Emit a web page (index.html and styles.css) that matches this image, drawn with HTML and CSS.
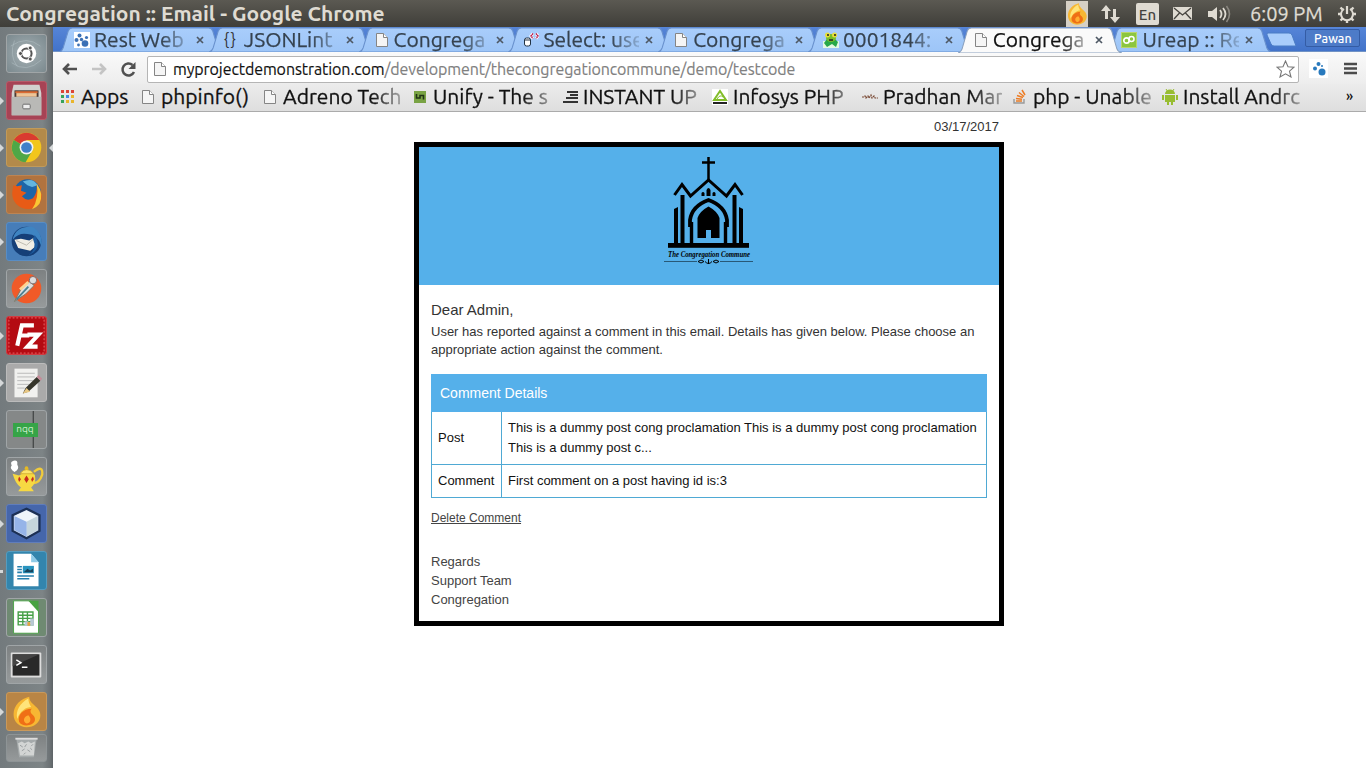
FILE: index.html
```html
<!DOCTYPE html>
<html lang="en">
<head>
<meta charset="utf-8">
<title>Congregation :: Email</title>
<link rel="stylesheet" href="styles.css">
</head>
<body>
<svg class="defs" width="0" height="0">
  <defs>
    <linearGradient id="tabfill" x1="0" y1="0" x2="0" y2="1"><stop offset="0" stop-color="#a9cdfb"/><stop offset="1" stop-color="#9dc5f7"/></linearGradient>
    <symbol id="doc" viewBox="0 0 16 16"><path d="M2.500 1.500h7l4 4v9h-11z" fill="#f5f5f5" stroke="#858585"/><path d="M9.500 1.500v4h4" fill="#fff" stroke="#858585"/></symbol>
    <symbol id="tabshape" viewBox="0 0 160 25" preserveAspectRatio="none"><path d="M0 25Q3 24 4 21L9 4Q10 1 13 1H146Q149 1 150 4L155 21Q156 24 160 25Z"/></symbol>
    <symbol id="paws" viewBox="0 0 16 16"><rect width="16" height="16" fill="#fff"/><g fill="#3b70b5"><circle cx="5.500" cy="3.500" r="2"/><circle cx="2.500" cy="8" r="2"/><circle cx="7.500" cy="7.500" r="1.700"/><circle cx="11" cy="11.500" r="3.300"/><circle cx="12.500" cy="5.500" r="1.600"/><circle cx="4.500" cy="13" r="1.400"/></g></symbol>
    <symbol id="flame" viewBox="0 0 40 40"><path d="M23 4C14 6 6 13 6 23C6 32 13 37 20 37C28 37 35 32 35 24C35 18 30 15 27 12C24 9 23 7 23 4Z" fill="#f7b733"/><path d="M22 6C13 11 8 19 10 28C13 19 20 15 25 15C23 12 22 9 22 6Z" fill="#ffe47a"/><path d="M26 17C16 17 10 24 12 31C15 37 27 36 29 30C30 26 27 24 25 22C24 20 24 18 26 17Z" fill="#ef6f16"/><path d="M22 24C16 26 16 31 20 33C24 33 26 28 22 24Z" fill="#ffad31"/></symbol>
  </defs>
</svg>

<header class="topbar">
  <h1 class="window-title">Congregation :: Email - Google Chrome</h1>
  <div class="indicators">
    <span class="ind-flame"><svg width="22" height="26" viewBox="3 2 34 37"><use href="#flame" width="40" height="40"/></svg></span>
    <svg class="ind-net" width="19" height="18" viewBox="0 0 19 18" fill="#dfdbd2"><path d="M5 0L10 6H7V14H4V6H0zM14 18L9 12h3V4h3v8h4z"/></svg>
    <span class="ind-lang">En</span>
    <svg class="ind-mail" width="19" height="13" viewBox="0 0 19 13"><rect width="19" height="13" rx="1" fill="#dfdbd2"/><path d="M1 1l8.500 7L18 1M1 12l5.500-6M18 12l-5.500-6" fill="none" stroke="#46443f" stroke-width="1.300"/></svg>
    <svg class="ind-vol" width="23" height="18" viewBox="0 0 23 18"><path d="M0 6h4l5-4v14l-5-4H0z" fill="#dfdbd2"/><path d="M12 5q3 4 0 8M15 3q5 6 0 12" fill="none" stroke="#dfdbd2" stroke-width="1.800"/><path d="M18.500 1q6 8 0 16" fill="none" stroke="#8a8780" stroke-width="1.600"/></svg>
    <span class="clock">6:09 PM</span>
    <svg class="ind-gear" width="20" height="20" viewBox="0 0 20 20" fill="none" stroke="#dfdbd2"><path d="M7 5A6 6 0 1 0 13 5" stroke-width="2"/><path d="M10 2v8" stroke-width="2.200"/><path d="M1 10h3M16 10h3M3.500 16.500l2.200-2.200M16.500 16.500l-2.200-2.200M10 16v3M3.500 3.500l2.200 2.200M16.500 3.500l-2.200 2.200" stroke-width="2.400"/></svg>
  </div>
</header>

<div class="desktop">
  <nav class="launcher">
    <div class="tile dash"><svg viewBox="0 0 40 40"><path d="M3 12Q20 0 35 12M4 30Q20 42 36 27M7 6Q1 22 10 34" fill="none" stroke="#b8c4c8" opacity=".5"/><circle cx="20" cy="20" r="10.500" fill="#fff"/><circle cx="20" cy="20" r="5.500" fill="none" stroke="#555" stroke-width="2.200"/><g fill="#555" stroke="#fff"><circle cx="13.500" cy="20" r="2.200"/><circle cx="24" cy="14" r="2.200"/><circle cx="24" cy="26" r="2.200"/></g></svg></div>
    <div class="tile files run"><svg viewBox="0 0 40 40"><path d="M6 3H34L36 12V36H4V12z" fill="#d2d1ce"/><path d="M7 9h26v8H7z" fill="#4c3932"/><path d="M8 10h24v2H8z" fill="#dc6c35"/><path d="M9 12h22v4H9z" fill="#f0c495"/><path d="M4 16H36V36H4z" fill="#b9b9b6"/><rect x="16" y="24" width="8" height="5" rx="1" fill="#eee" stroke="#666"/></svg></div>
    <div class="tile chrome run focus"><svg viewBox="0 0 40 40"><circle cx="20" cy="20" r="16" fill="#f2c61c"/><path d="M20 20L6.200 12A16 16 0 0 1 33.800 12H20z" fill="#d93b30"/><path d="M20 20L6.200 12A16 16 0 0 0 19 36L26.500 23z" fill="#4fa747"/><circle cx="20" cy="20" r="7.500" fill="#f3f3f3"/><circle cx="20" cy="20" r="5.800" fill="#3f80c8"/></svg></div>
    <div class="tile firefox run"><svg viewBox="0 0 40 40"><circle cx="21" cy="18" r="14.500" fill="#1d65a8"/><path d="M16 6Q27 1 32 10L26 12L21 10z" fill="#63b5df"/><path d="M6 10L10 11L15 10L14 16L20 18L15 22Q20 28 27 24Q32 18 31 10Q40 20 34 30Q26 39 14 34Q1 27 6 10Z" fill="#e85b16"/><path d="M31 8Q39 19 34 30Q31 34 26 36Q34 24 31 8Z" fill="#f9c734"/></svg></div>
    <div class="tile bird run"><svg viewBox="0 0 40 40"><circle cx="20" cy="20" r="16" fill="#153f78"/><path d="M5 18Q8 3 26 4Q38 10 36 25Q32 12 21 12Q12 10 5 18Z" fill="#3e84c2"/><path d="M7 18L14 17L23 19L28 16L30 25L24 30L11 27Z" fill="#f1eee5"/><path d="M9 19L20 24L28 17" fill="none" stroke="#bab7ad"/><path d="M29 13Q38 28 22 35Q32 28 27 17z" fill="#1d5b9f"/></svg></div>
    <div class="tile postman"><svg viewBox="0 0 40 40"><circle cx="20" cy="20" r="16" fill="#f05a28"/><path d="M7 34L14 21L24 12L28 17L19 26Z" fill="#ddd" stroke="#776"/><path d="M9 32L22 18" stroke="#4c8192" stroke-width="2"/><circle cx="27" cy="11" r="4" fill="#ddd" stroke="#766"/><path d="M13 21L22 13" stroke="#ffd390" stroke-width="3"/></svg></div>
    <div class="tile filezilla run"><svg viewBox="0 0 40 40"><rect x="1" y="1" width="38" height="38" fill="#b40b12" stroke="#e86a6a" stroke-dasharray="2 2"/><path d="M10 31L15 9H28M13 20H23M21 19H33L21 32H32" fill="none" stroke="#fff" stroke-width="4.500"/></svg></div>
    <div class="tile gedit run"><svg viewBox="0 0 40 40"><path d="M7 5h25v31H7z" fill="#f1f1ef"/><path d="M10 10h19M10 14h19M10 18h17M10 22h15M10 26h8" stroke="#b6b6b6"/><path d="M16 32L19 26L31 14L35 18L22 30z" fill="#35352b"/><path d="M20 26L24 30L16 32z" fill="#e8c783"/><path d="M31 14l2-2 4 4-2 2z" fill="#c58b99"/></svg></div>
    <div class="tile nqq"><span class="nqq-label">nqq</span></div>
    <div class="tile teapot"><svg viewBox="0 0 40 40"><path d="M28 15Q38 7 37 18Q34 27 28 27" fill="none" stroke="#f0cb3c" stroke-width="2.500"/><path d="M5 17L12 19Q21 12 29 18Q31 27 25 32L28 36H11L14 32Q8 28 5 17z" fill="#f7d942"/><path d="M13 17Q20 8 28 17z" fill="#fbe36a" stroke="#c79c22" stroke-width=".7"/><circle cx="20" cy="11" r="2" fill="#e6b923"/><path d="M12 20l2 3-2 3-1-3zM20 19l2.500 4-2.500 4-2.500-4zM27 20l1 3-2 3-1-3z" fill="#c62c1e"/><path d="M7 15Q1 11 4 8Q2 4 6 3Q11 2 10 7Q13 12 7 15" fill="#fff"/></svg></div>
    <div class="tile netbeans run"><svg viewBox="0 0 40 40"><path d="M20 4L34 11V28L20 36L5 28V11Z" fill="#d1dcf1" stroke="#1c3054" stroke-width="2.500"/><path d="M20 17L32 12V27L20 34z" fill="#c5d5dc"/><path d="M20 17L7 12V27L20 34z" fill="#96b4e8"/><path d="M7 12L20 6L32 12L20 18z" fill="#eff5fa"/></svg></div>
    <div class="tile writer bar"><svg viewBox="0 0 40 40"><path d="M6 2H25L33 11V37H6z" fill="#fff"/><path d="M25 2L33 11H25z" fill="#8fcbe8"/><path d="M10 16h5M10 19h5M10 22h5M10 26h18M10 29h13" stroke="#247fad" stroke-width="1.700"/><path d="M16 15h12v8H16z" fill="#2994bf"/><path d="M17 22l4-4 3 2 3-2v4z" fill="#19435b"/></svg></div>
    <div class="tile calc"><svg viewBox="0 0 40 40"><path d="M6 2H25L33 11V37H6z" fill="#fff" stroke="#48a242"/><path d="M22 2h11v12z" fill="#48a242"/><path d="M11 14h16v14H11zM11 17.500h16M11 21h16M11 24.500h16M16 14v14M21 14v14" fill="none" stroke="#46a047" stroke-width="1.500"/><path d="M18 24h4v5h-4zM24 21h4v8h-4z" fill="#b8c8d4"/><path d="M21 25h3v4h-3z" fill="#e2a342"/></svg></div>
    <div class="tile term"><svg viewBox="0 0 40 40"><rect x="3" y="7" width="33" height="27" rx="1" fill="#ddd"/><rect x="5" y="9" width="29" height="23" fill="#292929"/><path d="M5 9h29L5 22z" fill="#444"/><path d="M9 15l5 3-5 3M15 23h6" fill="none" stroke="#fff" stroke-width="1.600"/></svg></div>
    <div class="tile burn run"><svg viewBox="0 0 40 40"><use href="#flame" width="40" height="40"/></svg></div>
    <div class="tile trash"><svg viewBox="0 0 40 28"><path d="M9 4H31L28 24H12z" fill="#a5aaab"/><path d="M8 4H32" stroke="#ddd" stroke-width="2"/><path d="M11 9l4-2 3 2 4-2 3 2 4-2-1 15H13z" fill="#d3d5d4"/><path d="M13 11l3 2M20 10l-2 3M25 12l2-2M15 17l3-2M21 16l3 2M17 21l2-2M26 16l-2-2" stroke="#979c9d"/></svg></div>
  </nav>

  <section class="browser">
    <div class="tabstrip">
      <div class="tab"><svg class="shape"><use href="#tabshape"/></svg><svg class="fav"><use href="#paws"/></svg><span class="label">Rest Web</span><svg class="close" viewBox="0 0 8 8"><path d="M1 1L7 7M7 1L1 7"/></svg></div>
      <div class="tab"><svg class="shape"><use href="#tabshape"/></svg><span class="fav braces">{}</span><span class="label">JSONLint</span><svg class="close" viewBox="0 0 8 8"><path d="M1 1L7 7M7 1L1 7"/></svg></div>
      <div class="tab"><svg class="shape"><use href="#tabshape"/></svg><svg class="fav"><use href="#doc"/></svg><span class="label">Congrega</span><svg class="close" viewBox="0 0 8 8"><path d="M1 1L7 7M7 1L1 7"/></svg></div>
      <div class="tab"><svg class="shape"><use href="#tabshape"/></svg><svg class="fav" viewBox="0 0 16 16"><rect x="1.500" y="6" width="6" height="8" rx="2" fill="#fff" stroke="#234"/><path d="M2 8h5" stroke="#234"/><path d="M10 1.500L8 4L10 6.500M13 1.500l2 2.500L13 6.500" fill="none" stroke="#fff" stroke-width="3"/><path d="M10 1.500L8 4L10 6.500M13 1.500l2 2.500L13 6.500" fill="none" stroke="#b41c4c" stroke-width="1.500" stroke-dasharray="1.500 .5"/></svg><span class="label">Select: use</span><svg class="close" viewBox="0 0 8 8"><path d="M1 1L7 7M7 1L1 7"/></svg></div>
      <div class="tab"><svg class="shape"><use href="#tabshape"/></svg><svg class="fav"><use href="#doc"/></svg><span class="label">Congrega</span><svg class="close" viewBox="0 0 8 8"><path d="M1 1L7 7M7 1L1 7"/></svg></div>
      <div class="tab"><svg class="shape"><use href="#tabshape"/></svg><svg class="fav" viewBox="0 0 16 16"><path d="M0 9h16v7H0z" fill="#e5fae2"/><path d="M4 7h8l3 3-2 5-4-3-5 3-3-4z" fill="#27a849"/><ellipse cx="8" cy="6" rx="5" ry="4" fill="#78bd2b"/><circle cx="4.500" cy="3" r="2.500" fill="#e8df38"/><circle cx="11.500" cy="3" r="2.500" fill="#e8df38"/><path d="M4 3h2M11 3h2M6 8h4" stroke="#222" stroke-width="1.300"/></svg><span class="label">0001844:</span><svg class="close" viewBox="0 0 8 8"><path d="M1 1L7 7M7 1L1 7"/></svg></div>
      <div class="tab active"><svg class="shape"><use href="#tabshape"/></svg><svg class="fav"><use href="#doc"/></svg><span class="label">Congrega</span><svg class="close" viewBox="0 0 8 8"><path d="M1 1L7 7M7 1L1 7"/></svg></div>
      <div class="tab"><svg class="shape"><use href="#tabshape"/></svg><svg class="fav fav-ureap" viewBox="0 0 16 16"><rect width="16" height="16" fill="#b9d66c"/><rect x="1" y="1" width="14" height="14" fill="#8cc63f"/><circle cx="5.500" cy="8.500" r="2.700" fill="none" stroke="#fff" stroke-width="1.700"/><circle cx="10.500" cy="7" r="2.500" fill="none" stroke="#fff" stroke-width="1.500"/></svg><span class="label">Ureap :: Re</span><svg class="close" viewBox="0 0 8 8"><path d="M1 1L7 7M7 1L1 7"/></svg></div>
      <svg class="newtab" width="32" height="16" viewBox="0 0 32 16"><path d="M2 1H23Q25 1 26 3L30 14H8Q6 14 5 12L1 3Q0.500 1 2 1z" fill="#a9cdfb" stroke="#4b7cc5"/></svg>
      <span class="user">Pawan</span>
    </div>

    <div class="toolbar">
      <svg class="nav back" width="18" height="16" viewBox="0 0 18 16"><path d="M16 8H3M8 3L3 8L8 13" fill="none" stroke="#505050" stroke-width="2.600"/></svg>
      <svg class="nav forward" width="18" height="16" viewBox="0 0 18 16"><path d="M1 8H14M9 3L14 8L9 13" fill="none" stroke="#c4c4c4" stroke-width="2.600"/></svg>
      <svg class="nav reload" width="17" height="17" viewBox="0 0 17 17"><path d="M14 11A6 6 0 1 1 12.500 4" fill="none" stroke="#505050" stroke-width="2.500"/><path d="M15.500 1v7h-7z" fill="#505050"/></svg>
      <div class="omnibox">
        <svg width="16" height="16"><use href="#doc"/></svg>
        <span class="url"><b>myprojectdemonstration.com</b>/development/thecongregationcommune/demo/testcode</span>
        <svg class="star" width="19" height="18" viewBox="0 0 19 18"><path d="M9.500 1L12 6.700L18 7.200L13.500 11.200L15 17L9.500 13.800L4 17L5.500 11.200L1 7.200L7 6.700Z" fill="#fff" stroke="#777" stroke-width="1.100"/></svg>
      </div>
      <svg class="ext" width="19" height="19" viewBox="0 0 19 19"><rect width="19" height="19" fill="#fff"/><g fill="#2879bd"><circle cx="9.500" cy="5" r="2"/><circle cx="6" cy="9.500" r="2"/><circle cx="13" cy="13" r="3.500"/><circle cx="13" cy="7" r="1"/></g></svg>
      <svg class="menu" width="13" height="13" viewBox="0 0 13 13"><path d="M0 2h13M0 6.500h13M0 11h13" stroke="#4b4b4b" stroke-width="2.600"/></svg>
    </div>

    <div class="bookmarks">
      <div class="bm b-apps"><svg viewBox="0 0 16 16"><path d="M1 1h3v3H1zM6 1h3v3H6zM11 1h3v3h-3z" fill="#dc4437"/><path d="M1 6h3v3H1zM1 11h3v3H1z" fill="#36a35a"/><path d="M6 6h3v3H6z" fill="#4387e5"/><path d="M11 6h3v3h-3zM6 11h3v3H6zM11 11h3v3h-3z" fill="#e9b52c"/></svg><span>Apps</span></div>
      <div class="bm b-php"><svg><use href="#doc"/></svg><span>phpinfo()</span></div>
      <div class="bm fade"><svg><use href="#doc"/></svg><span>Adreno Tech</span></div>
      <div class="bm fade"><svg viewBox="0 0 16 16"><rect x="2" y="2" width="12" height="12" fill="#79a344"/><path d="M4.500 5v4h3.500V6.500h3.500v4" fill="none" stroke="#213416" stroke-width="1.600"/></svg><span>Unify - The s</span></div>
      <div class="bm fade"><svg viewBox="0 0 16 16"><path d="M5 3h11M8 6h8M4 9h12M1 13h15" stroke="#333" stroke-width="2"/></svg><span>INSTANT UP</span></div>
      <div class="bm fade"><svg viewBox="0 0 16 16"><rect width="16" height="16" fill="#fff"/><path d="M8 2L2 11H14z" fill="none" stroke="#82bd29" stroke-width="2"/><path d="M5 10Q8 5 11 8" fill="none" stroke="#82bd29"/><path d="M1 13h14v2H1z" fill="#222"/></svg><span>Infosys PHP</span></div>
      <div class="bm fade"><svg viewBox="0 0 16 16"><path d="M0 8h2l1-1 1 2 2-2 1 2 2-3 1 3 2-2 1 2h3" fill="none" stroke="#7a4a35" stroke-width="1.200" stroke-dasharray="2 .7"/></svg><span>Pradhan Mar</span></div>
      <div class="bm fade"><svg viewBox="0 0 16 16"><path d="M2 10v4h10v-4" fill="none" stroke="#999" stroke-width="1.400"/><path d="M4 12h6M4 9.500l6 .7M5 6.500l6 2M7 3.500l5 4M10 1l3 5" stroke="#ec7c25" stroke-width="1.500"/></svg><span>php - Unable</span></div>
      <div class="bm fade"><svg viewBox="0 0 16 16" fill="#98bd31"><path d="M3 5A5 4.500 0 0 1 13 5zM3 6h10v7H3zM0 6h2v5H0zM14 6h2v5h-2zM5 13h2v3H5zM9 13h2v3H9z"/><path d="M4 0l2 3M12 0l-2 3" stroke="#98bd31"/></svg><span>Install Andrc</span></div>
      <span class="more">»</span>
    </div>

    <main class="page">
      <article class="mail">
        <div class="date">03/17/2017</div>
        <div class="card">
          <div class="banner">
            <svg width="92" height="114" viewBox="0 0 92 114">
              <path d="M45.500 2V26M39 7.500H52" stroke="#000" stroke-width="2.500" fill="none"/>
              <path d="M11.500 40L19 29.500L27.500 41L45.500 25L63.500 41L72 29.500L79.500 40" fill="none" stroke="#000" stroke-width="3"/>
              <path d="M17.500 40h4v48h-4zM69.500 40h4v48h-4zM11 54l4-2v36h-4zM76 52l4 2v34h-4z"/>
              <path d="M43.500 35q2-4 4 0v6h-4zM38.500 38q1.500-2 3 0v3h-3zM49.500 38q1.500-2 3 0v3h-3z"/>
              <path d="M27 72V65Q29 51 45.500 45Q62 51 64 65V72" fill="none" stroke="#000" stroke-width="3.800"/>
              <path d="M28.500 67V88M62.500 67V88" stroke="#000" stroke-width="3.400"/>
              <path d="M34.500 83V63Q37 56 45.500 51.500Q54 56 56.500 63V83H48V75H43V83z"/>
              <rect x="5" y="88" width="81" height="4.800"/>
              <text class="logo-text" x="5" y="102" textLength="82" lengthAdjust="spacingAndGlyphs">The Congregation Commune</text>
              <path d="M1 106.500H34M57 106.500H90" stroke="#1d4259" stroke-width=".8"/>
              <path d="M35 106.500q3-3 6 0q-3 3-6 0M56 106.500q-3-3-6 0q3 3 6 0M42 106.500q3.500 4 7 0M45.500 104v5" fill="none" stroke="#000"/>
            </svg>
          </div>
          <div class="content">
            <p class="greeting">Dear Admin,</p>
            <p class="intro">User has reported against a comment in this email. Details has given below. Please choose an appropriate action against the comment.</p>
            <table class="details">
              <thead><tr><th colspan="2">Comment Details</th></tr></thead>
              <tbody>
                <tr class="post"><td>Post</td><td>This is a dummy post cong proclamation This is a dummy post cong proclamation This is a dummy post c...</td></tr>
                <tr class="comment"><td>Comment</td><td>First comment on a post having id is:3</td></tr>
              </tbody>
            </table>
            <a class="delete" href="#">Delete Comment</a>
            <p class="sign">Regards<br>Support Team<br>Congregation</p>
          </div>
        </div>
      </article>
    </main>
  </section>
</div>
</body>
</html>
```
FILE: styles.css
```css
* { box-sizing: border-box; }
body { margin: 0; width: 1366px; height: 768px; overflow: hidden; background: #fff; font-family: Ubuntu, "Noto Sans", sans-serif; }
h1, p { margin: 0; }
.defs { position: absolute; }
svg { display: block; flex: none; }

.topbar { display: flex; justify-content: space-between; align-items: center; height: 27px; padding: 0 9px 0 6px; background: linear-gradient(#5b5952, #3f3e39); color: #dfdbd2; }
.window-title { font-size: 21px; line-height: 27px; font-weight: 700; white-space: nowrap; }
.indicators { display: flex; align-items: center; height: 27px; }
.ind-flame { width: 22px; height: 26px; margin-right: 13px; background: #d6d0c5; }
.ind-net { margin-right: 16px; }
.ind-lang { width: 23px; height: 22px; margin-right: 14px; border-radius: 2px; background: #dfdbd2; color: #45433e; font-size: 15px; font-weight: 500; line-height: 23px; text-align: center; }
.ind-mail { margin-right: 16px; }
.ind-vol { margin-right: 19px; }
.clock { width: 74px; margin-right: 13px; font-size: 20px; line-height: 27px; white-space: nowrap; -webkit-text-stroke: .25px; }

.desktop { display: flex; height: 741px; }
.launcher { display: flex; flex-direction: column; gap: 8px; width: 53px; padding: 7px 0 0 6px; background: linear-gradient(90deg, #737a7d, #7d8486 80%, #6c7275 94%, #5e6467); }
.tile { position: relative; flex: none; width: 41px; height: 39px; border: 1px solid #a0a5a7; border-radius: 3px; background: linear-gradient(#7d8182, #969a9b); }
.tile > svg { width: 39px; height: 37px; }
.dash { background: radial-gradient(#a5b1b5, #7b898e); }
.files { background: #a74355; border-color: #b85b69; }
.chrome { background: #b38a4a; border-color: #c19a5a; }
.firefox { background: #b1733f; border-color: #bd8452; }
.bird { background: #467db9; border-color: #588dc5; }
.filezilla { background: #c0151d; border-color: #d13c42; }
.gedit { background: #aaa; border-color: #bbb; }
.netbeans { background: #4566ab; border-color: #607dbb; }
.writer { background: #3385ad; border-color: #559cbf; }
.calc { background: #6f8a72; }
.burn { background: #b98545; border-color: #c9995b; }
.trash { height: 28px; margin-top: -5px; border-color: #8e9496; }
.trash > svg { height: 26px; }
.nqq { display: flex; align-items: center; justify-content: center; background: linear-gradient(90deg, #858888 65%, #484b4b 66%, #484b4b 69%, #858888 70%); }
.nqq-label { width: 25px; height: 14px; margin-right: 3px; background: #36a447; color: #d2efd2; font-size: 10px; line-height: 12px; text-align: center; }
.run::before { content: ""; position: absolute; left: -7px; top: 15px; border: 4px solid transparent; border-left: 4px solid #d5d8d9; border-right: 0; }
.bar::before { content: ""; position: absolute; left: -7px; top: 18px; width: 3px; height: 3px; background: #d5d8d9; }
.focus::after { content: ""; position: absolute; right: -7px; top: 15px; border: 4px solid transparent; border-right: 4px solid #d5d8d9; border-left: 0; }

.browser { display: flex; flex-direction: column; width: 1313px; }
.tabstrip { display: flex; height: 25px; padding-left: 8px; background: linear-gradient(#5685d8, #4273c9); border-bottom: 1px solid #7193c5; }
.tab { position: relative; display: flex; align-items: center; flex: none; width: 149.8px; height: 25px; padding-left: 13px; color: #35424f; }
.shape { position: absolute; left: -2px; top: 0; width: 164px; height: 25px; fill: url(#tabfill); stroke: #6991cd; stroke-width: 1; }
.fav { position: relative; width: 16px; height: 16px; margin-right: 4px; }
.fav-ureap { margin-left: -2px; margin-right: 6px; }
.braces { font-size: 16px; line-height: 14px; letter-spacing: 1px; color: #333; }
.label { position: relative; width: 96px; overflow: hidden; font-size: 21px; line-height: 27px; white-space: nowrap; -webkit-text-stroke: .25px; -webkit-mask-image: linear-gradient(90deg, #000 70%, rgba(0, 0, 0, .2)); mask-image: linear-gradient(90deg, #000 70%, rgba(0, 0, 0, .2)); }
.close { position: relative; width: 8px; height: 8px; margin-left: 6px; stroke: #4e5864; stroke-width: 1.7; }
.active { z-index: 2; color: #111; }
.active .shape { fill: #fafafa; stroke: #8aa0bd; height: 26px; }
.newtab { margin: 5px 0 0 7px; }
.user { width: 55px; height: 18px; margin: 2px 0 0 7px; border: 1px solid #345ca5; border-radius: 2px; color: #fff; background: #4d7bc8; font-size: 12.5px; font-weight: 500; line-height: 16px; text-align: center; }

.toolbar { display: flex; align-items: center; height: 32px; padding-left: 8px; background: linear-gradient(#fafafa, #ededed); }
.nav { margin-top: 2px; }
.back { margin-right: 12px; }
.forward { margin-right: 11px; }
.reload { margin-right: 10px; }
.omnibox { display: flex; align-items: center; width: 1152px; height: 27px; margin-top: 2px; padding: 0 3px 0 4px; border: 1px solid #b5b5b5; border-radius: 2px; background: #fff; }
.url { flex: 1; margin-left: 5px; font-size: 16px; line-height: 24px; letter-spacing: -.09px; color: #808080; white-space: nowrap; -webkit-text-stroke: .15px; }
.url b { font-weight: 400; color: #111; }
.ext { margin-left: 10px; }
.menu { margin-left: 16px; }

.bookmarks { display: flex; height: 28px; padding-left: 7px; background: linear-gradient(#ececec, #dedede); border-bottom: 1px solid #ababab; color: #111; }
.bm { display: flex; align-items: center; flex: none; width: 150px; height: 26px; font-size: 21px; white-space: nowrap; -webkit-text-stroke: .3px; }
.bm svg { width: 16px; height: 16px; margin-right: 5px; }
.bm span { height: 26px; line-height: 25px; }
.fade span { width: 119px; overflow: hidden; -webkit-mask-image: linear-gradient(90deg, #000 75%, rgba(0, 0, 0, .3)); mask-image: linear-gradient(90deg, #000 75%, rgba(0, 0, 0, .3)); }
.b-apps { width: 80px; }
.b-php { width: 122px; }
.more { width: 12px; margin-left: 34px; font-size: 14px; font-weight: 500; line-height: 24px; }

.page { flex: 1; padding: 7px 0 0 361px; background: #fff; font-family: "Liberation Sans", Arial, sans-serif; color: #333; }
.mail { width: 590px; }
.date { height: 23px; padding-right: 5px; font-size: 13px; line-height: 16px; text-align: right; }
.card { height: 484px; border: 5px solid #000; }
.banner { display: flex; justify-content: center; height: 138px; padding-top: 8px; background: #55b0ea; }
.logo-text { font-family: "Liberation Serif", serif; font-size: 8px; font-style: italic; font-weight: 700; }
.content { padding: 16px 12px 0; }
.greeting { font-size: 15px; line-height: 18px; }
.intro { margin-top: 4px; font-size: 13px; line-height: 18px; }
.details { width: 556px; margin-top: 15px; border-collapse: collapse; font-size: 13px; line-height: 20px; color: #111; }
.details th { height: 37px; padding: 0 8px; border: 1px solid #55b0ea; background: #55b0ea; color: #fff; font-size: 14px; font-weight: 400; text-align: left; }
.details td { padding: 6px; border: 1px solid #4fa9d4; }
.details td:first-child { width: 70px; }
.delete { display: block; margin-top: 12px; font-size: 12px; line-height: 16px; color: #444; text-decoration: underline; }
.sign { margin-top: 26px; font-size: 13px; line-height: 19px; color: #444; }
```
